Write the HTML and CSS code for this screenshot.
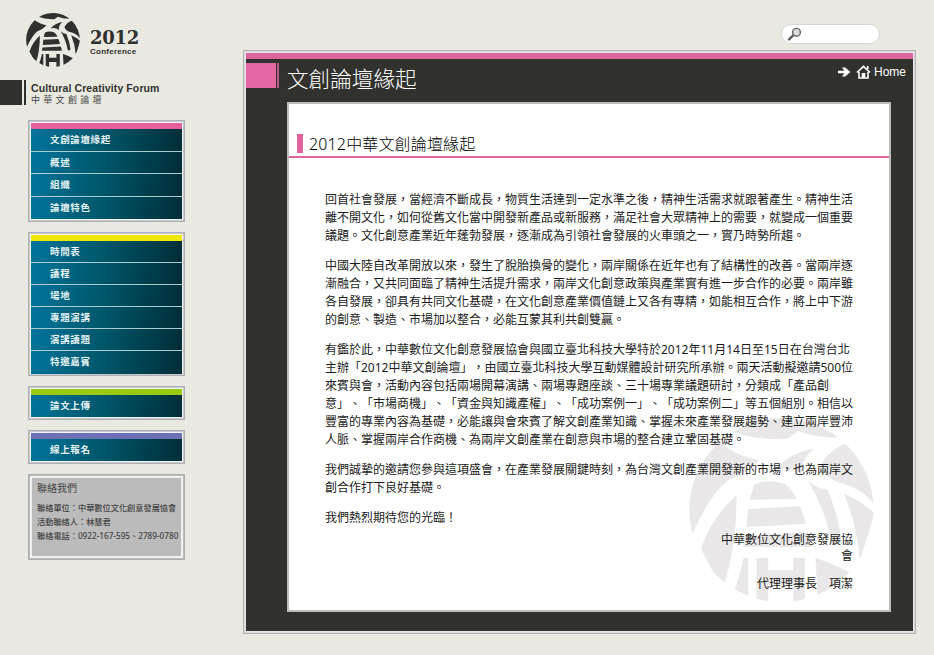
FILE: index.html
```html
<!DOCTYPE html>
<html lang="zh-Hant">
<head>
<meta charset="utf-8">
<title>文創論壇緣起</title>
<link rel="stylesheet" href="styles.css">
</head>
<body>
<svg class="defs" width="0" height="0" aria-hidden="true">
  <defs>
    <clipPath id="disc"><ellipse cx="290" cy="281" rx="277" ry="276"/></clipPath>
    <symbol id="emblem" viewBox="12 5 556 552" preserveAspectRatio="none">
      <g clip-path="url(#disc)" fill="currentColor">
        <path d="M88 72L150 108Q190 128 224 130Q190 168 130 192Q70 240 24 350L0 300V100Z"/>
        <path d="M138 44Q210 72 305 68L340 44Q400 68 480 62L400 0H180Z"/>
        <path d="M388 98Q330 102 265 160Q315 150 352 178Q345 128 388 98Z"/>
        <path d="M490 78Q425 105 408 150Q425 190 468 200Q530 215 568 262L600 150Z"/>
        <path d="M478 232Q525 252 570 290L525 435Q518 330 478 232Z"/>
        <path d="M370 192Q395 218 428 220Q462 300 470 375Q450 400 440 375Q425 290 370 192Z"/>
        <path d="M208 205Q255 185 305 205Q325 225 336 248L194 250Z"/>
        <path d="M190 278L345 270Q358 295 362 322L185 332Z"/>
        <path d="M182 358L370 348Q378 370 380 392H175Z"/>
        <path d="M155 235Q75 310 48 398L112 520Q155 400 155 235Z"/>
        <path d="M215 425H250V462H325V425H360V570H325V505H250V570H215Z"/>
        <path d="M176 425H190V570L145 530Q165 480 176 425Z"/>
        <path d="M392 425Q440 440 500 470L400 560Z"/>
      </g>
    </symbol>
  </defs>
</svg>
<div class="page">
  <aside class="side">
    <div class="brand">
      <svg class="logo"><use href="#emblem"/></svg>
      <div class="year"><b>2012</b><span>Conference</span></div>
    </div>
    <div class="forum">
      <i class="block"></i><i class="bar"></i>
      <div class="names"><b>Cultural Creativity Forum</b><span>中華文創論壇</span></div>
    </div>
    <nav class="menus">
      <ul class="menu pink"><li>文創論壇緣起</li><li>概述</li><li>組織</li><li>論壇特色</li></ul>
      <ul class="menu yellow"><li>時間表</li><li>議程</li><li>場地</li><li>專題演講</li><li>演講議題</li><li>特邀嘉賓</li></ul>
      <ul class="menu green"><li>論文上傳</li></ul>
      <ul class="menu violet"><li>線上報名</li></ul>
      <div class="contact">
        <h3>聯絡我們</h3>
        <p>聯絡單位：中華數位文化創意發展協會</p>
        <p>活動聯絡人：林慧君</p>
        <p>聯絡電話：0922-167-595、2789-0780</p>
      </div>
    </nav>
  </aside>
  <div class="content">
    <div class="search">
      <svg width="16" height="16" viewBox="0 0 16 16"><path d="M2 13.5L6.5 9" stroke="#555" stroke-width="2.4" stroke-linecap="round"/><circle cx="9.5" cy="6.3" r="3.9" fill="#ddd" stroke="#686868" stroke-width="1.4"/></svg>
    </div>
    <main class="frame">
      <header class="top">
        <i class="block"></i><i class="bar"></i>
        <h1>文創論壇緣起</h1>
        <a class="home">
          <svg width="13" height="12" viewBox="0 0 13 12"><path d="M0 4.7H6.3L4 1.5H7.3L12.3 6L7.3 10.5H4L6.3 7.3H0Z" fill="#fff"/></svg>
          <svg class="house" width="15" height="14" viewBox="0 0 15 14"><path d="M1 7.5L7.5 1.3L14 7.5M11.7 1V4" fill="none" stroke="#fff" stroke-width="1.7"/><path d="M3 7V13H12V7" fill="none" stroke="#fff" stroke-width="1.6"/><path d="M5.7 13V8H9.3V13Z" fill="#fff"/></svg>
          <span>Home</span>
        </a>
      </header>
      <article class="paper">
        <h2><i></i>2012中華文創論壇緣起</h2>
        <svg class="mark"><use href="#emblem"/></svg>
        <div class="text">
          <p>回首社會發展，當經濟不斷成長，物質生活達到一定水準之後，精神生活需求就跟著產生。精神生活<br>離不開文化，如何從舊文化當中開發新產品或新服務，滿足社會大眾精神上的需要，就變成一個重要<br>議題。文化創意產業近年蓬勃發展，逐漸成為引領社會發展的火車頭之一，實乃時勢所趨。</p>
          <p>中國大陸自改革開放以來，發生了脫胎換骨的變化，兩岸關係在近年也有了結構性的改善。當兩岸逐<br>漸融合，又共同面臨了精神生活提升需求，兩岸文化創意政策與產業實有進一步合作的必要。兩岸雖<br>各自發展，卻具有共同文化基礎，在文化創意產業價值鏈上又各有專精，如能相互合作，將上中下游<br>的創意、製造、市場加以整合，必能互蒙其利共創雙贏。</p>
          <p>有鑑於此，中華數位文化創意發展協會與國立臺北科技大學特於2012年11月14日至15日在台灣台北<br>主辦「2012中華文創論壇」，由國立臺北科技大學互動媒體設計研究所承辦。兩天活動擬邀請500位<br>來賓與會，活動內容包括兩場開幕演講、兩場專題座談、三十場專業議題研討，分類成「產品創<br>意」、「市場商機」、「資金與知識產權」、「成功案例一」、「成功案例二」等五個組別。相信以<br>豐富的專業內容為基礎，必能讓與會來賓了解文創產業知識、掌握未來產業發展趨勢、建立兩岸豐沛<br>人脈、掌握兩岸合作商機、為兩岸文創產業在創意與市場的整合建立鞏固基礎。</p>
          <p>我們誠摯的邀請您參與這項盛會，在產業發展關鍵時刻，為台灣文創產業開發新的市場，也為兩岸文<br>創合作打下良好基礎。</p>
          <p>我們熱烈期待您的光臨！</p>
          <div class="sign"><p>中華數位文化創意發展協<br>會</p><p>代理理事長　項潔</p></div>
        </div>
      </article>
    </main>
  </div>
</div>
</body>
</html>
```
FILE: styles.css
```css
* { box-sizing: border-box; margin: 0; padding: 0; }
body {
  width: 934px; height: 655px; overflow: hidden;
  background: #e9e9e2; color: #000;
  font-family: "Noto Sans", "Noto Sans CJK TC", sans-serif;
  text-spacing-trim: space-all;
}
i { display: block; }
.defs { position: absolute; }
.page { display: flex; height: 655px; }
.side { width: 243px; }
.brand { display: flex; height: 80px; padding: 13px 0 0 26px; color: #30302e; }
.logo { display: block; width: 54px; height: 54px; }
.year { margin: 16px 0 0 10px; line-height: 1; }
.year b { display: block; height: 18px; font: 900 18px/18px "DejaVu Serif", serif; letter-spacing: -.3px; }
.year span { display: block; margin-top: 1px; font: bold 8px/8px "Liberation Sans", sans-serif; letter-spacing: .25px; }
.forum { display: flex; height: 40px; color: #33322f; }
.forum .block { width: 22px; height: 25px; background: #30302e; }
.forum .bar { width: 2px; height: 25px; margin-left: 2px; background: #30302e; }
.names { padding: 2px 0 0 5px; }
.names b { display: block; font: bold 10.5px/13px "Liberation Sans", sans-serif; letter-spacing: .1px; white-space: nowrap; }
.names span { display: block; font-size: 9px; line-height: 10px; letter-spacing: 3.3px; color: #444; }
.menus { display: flex; flex-direction: column; gap: 10px; padding-left: 28px; }
.menu { width: 157px; list-style: none; border: 1px solid #aeb0b7; outline: 1px solid #c9c9cc; outline-offset: -2px; padding: 2px; background: #f2f5f5; }
.menu::before { content: ""; display: block; height: 6px; background: var(--tab); }
.menu li {
  height: 22.3px; padding-left: 19px; font-size: 9.5px; line-height: 22px; font-weight: 700; letter-spacing: .65px;
  color: #e6f3f5; border-bottom: 1px solid #a9cbd2;
  background: linear-gradient(100deg, #00749b 0%, #005568 50%, #002d36 100%);
}
.menu li:last-child { border-bottom: 0; }
.pink { --tab: #e5609c; height: 102px; }
.pink li { height: 22.6px; }
.yellow { --tab: #eee800; height: 144px; }
.yellow li { height: 22.1px; }
.green { --tab: #9bca12; height: 34px; }
.violet { --tab: #6e70b5; height: 34px; }
.contact { width: 157px; height: 86px; border: 1px solid #aeaeae; outline: 2px solid #f0f0f0; outline-offset: -4px; padding: 7px 0 0 8px; background: #bbb; color: #444; white-space: nowrap; }
.contact h3 { font-size: 10px; line-height: 13px; font-weight: 400; margin-bottom: 6px; }
.contact p { font-size: 8.2px; line-height: 14.2px; font-weight: 500; }
.content { width: 673px; padding-top: 24px; }
.search { width: 99px; height: 20px; margin: 0 0 6px 538px; border: 1px solid #d6d6d2; border-radius: 10px; background: #fff; padding: 1px 0 0 5px; }
.search svg { display: block; }
.frame { display: flex; flex-direction: column; height: 584px; border: 1px solid #b4b1b1; outline: 1px solid #dad8da; outline-offset: -2px; padding: 2px; background: #e8e5e8; }
.top { height: 49px; display: flex; border-top: 6px solid #de659b; background: #31312e; color: #fff; padding-top: 4px; }
.top .block { width: 30px; height: 25px; background: #e367a3; }
.top .bar { width: 2px; height: 25px; margin-left: 1px; background: #b95887; }
.top h1 { margin-left: 8px; font-size: 21.6px; line-height: 31px; font-weight: 300; }
.home { display: flex; height: 16px; align-items: center; margin: 1px 7px 0 auto; font: 12px/16px "Liberation Sans", sans-serif; }
.house { margin: 0 3px 0 5px; }
.paper { position: relative; flex: 1; border: solid #31312e; border-width: 0 22px 19px 41px; background: #fff; font-weight: 400; }
.paper::after { content: ""; position: absolute; inset: 0; border: 2px solid #bdbdbd; }
.paper h2 { display: flex; height: 56px; padding: 31px 0 0 10px; border-bottom: 2px solid #e2639c; font-size: 16px; line-height: 22px; font-weight: 300; letter-spacing: .15px; }
.paper h2 i { width: 6px; height: 19px; margin: 1px 6px 0 0; background: #e2639c; }
.mark { display: block; position: absolute; left: 402px; top: 316px; width: 185px; height: 184px; color: #e9e7e7; }
.text { position: relative; padding: 33px 0 0 38px; font-size: 12px; line-height: 18px; white-space: nowrap; color: #1c1c1c; }
.text p { margin-bottom: 12px; }
.sign { width: 528px; margin-top: -7px; text-align: right; }
.sign p { line-height: 16px; margin-bottom: 12px; }
```
